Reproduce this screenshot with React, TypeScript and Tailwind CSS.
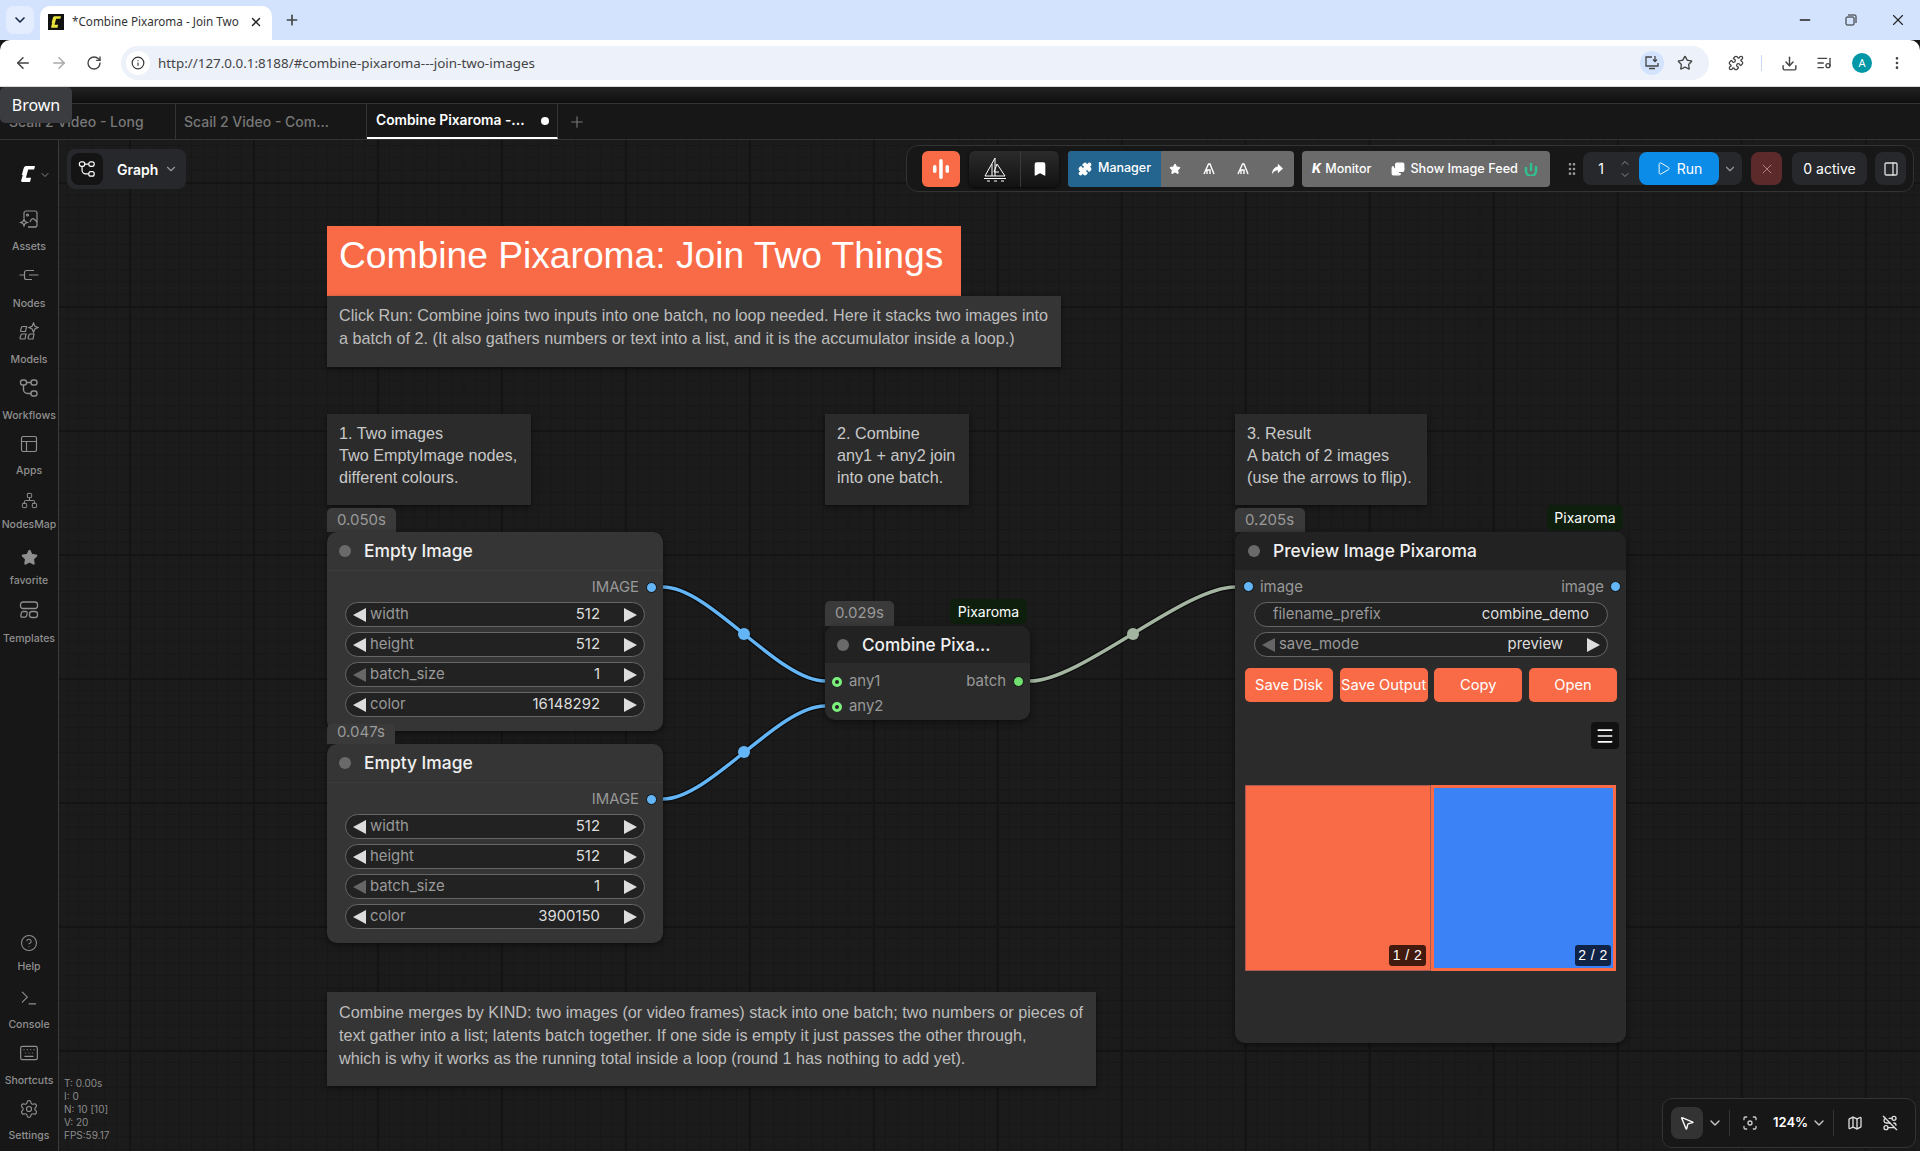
import type { ReactNode } from 'react';
import {
  ArrowLeft, ArrowRight, Bookmark, ChevronDown, ChevronUp, CircleHelp, Download, Focus, GripVertical,
  Images, Info, Keyboard, ListMusic, Map as MapIcon, Menu, Minus, MoreVertical, MousePointer2, Network,
  PanelRight, PanelsTopLeft, Play, Plus, Puzzle, RotateCw, RouteOff, Settings, Star, Terminal, X,
} from 'lucide-react';

const ICON = 'w-5 h-5 stroke-[1.4]';

function GraphIcon({ className = ICON }: { className?: string }) {
  return (
    <svg viewBox="0 0 20 20" fill="none" stroke="currentColor" strokeWidth="1.3" className={className}>
      <rect x="1.5" y="2" width="6" height="5" rx="2.2" />
      <rect x="12" y="2" width="6" height="5" rx="2.2" />
      <rect x="12" y="13" width="6" height="5" rx="2.2" />
      <path d="M7.5 4.5H12M4.5 7v4.5a4 4 0 0 0 4 4H12" />
    </svg>
  );
}

function AssetsIcon() {
  return (
    <svg viewBox="0 0 20 20" fill="none" stroke="currentColor" strokeWidth="1.2" className="w-5 h-5">
      <path d="M5 9V4a2 2 0 0 1 2-2h9a2 2 0 0 1 2 2v12a2 2 0 0 1-2 2H9" />
      <path d="M9 18h8M11 13c1-3 3-4 4-3l3 3" />
      <circle cx="8.5" cy="6" r="1" />
      <path d="M5 10l1 2.500 2.500 1-2.500 1L5 17l-1-2.500-2.500-1 2.500-1z" />
    </svg>
  );
}

function NodesIcon() {
  return (
    <svg viewBox="0 0 20 20" fill="none" stroke="currentColor" strokeWidth="1.2" className="w-5 h-5">
      <path d="M0.500 10H5M15 5.500H7.500a2 2 0 0 0-2 2v5a2 2 0 0 0 2 2H13M10 10h9.500" />
    </svg>
  );
}

function ModelsIcon() {
  return (
    <svg viewBox="0 0 20 20" fill="none" stroke="currentColor" strokeWidth="1.2" className="w-5 h-5">
      <path d="M3.500 4.500h4l-1 5h-4a1 1 0 0 1-1-1l1-3a1 1 0 0 1 1-1zM3 12h4l-1 5H2a1 1 0 0 1-1-1l1-3a1 1 0 0 1 1-1zM11 12h4l-1 5h-4a1 1 0 0 1-1-1l1-3a1 1 0 0 1 1-1z" />
      <path d="M14.500 1l1.400 3.200 3.200 1.400-3.200 1.400-1.400 3.200-1.400-3.200-3.200-1.400 3.200-1.400z" />
    </svg>
  );
}

function TemplatesIcon() {
  return (
    <svg viewBox="0 0 20 20" fill="none" stroke="currentColor" strokeWidth="1.3" className="w-5 h-5">
      <rect x="1.500" y="2" width="17" height="6.500" rx="2.500" />
      <path d="M3.500 11.500h3.500a1.200 1.200 0 0 1 1.200 1.400l-.6 3a1.600 1.600 0 0 1-1.600 1.300H3a1.200 1.200 0 0 1-1.200-1.400l.6-3a1.600 1.600 0 0 1 1.100-1.300z" />
      <rect x="10.500" y="11.500" width="8" height="6" rx="2.600" />
    </svg>
  );
}

function ComfyLogo({ className }: { className: string }) {
  return (
    <svg viewBox="0 0 14 16" className={className} fill="currentColor">
      <path d="M5 0h9l-.9 3.600H7.200L4.900 11.800h5.200L9 16H1.200C.4 16 0 15.400.2 14.600L1.800 9H.8L2.600 2.400C3 1 3.800 0 5 0z" />
    </svg>
  );
}

function Triangle({ dir, dim }: { dir: 'l' | 'r'; dim?: boolean }) {
  return (
    <svg viewBox="0 0 13 14" className={`w-[13px] h-[14px] shrink-0 ${dim ? 'text-[#666]' : 'text-[#ddd]'}`} fill="currentColor">
      <polygon points={dir === 'l' ? '13,0 13,14 0,7' : '0,0 0,14 13,7'} />
    </svg>
  );
}

function Mountain() {
  return (
    <svg viewBox="0 0 14 14" className="w-3.5 h-3.5" fill="none" stroke="white" strokeWidth="1.4">
      <path d="M2 12L6.500 2h1.500L12 12M5 12V8h3v4" />
    </svg>
  );
}

function Widget({ label, value, dimLeft }: { label: string; value: string; dimLeft?: boolean }) {
  return (
    <div className="h-[25px] rounded-full border border-[#666] bg-[#222] flex items-center px-[7px] text-[14.9px]">
      <Triangle dir="l" dim={dimLeft} />
      <span className="ml-[4px] text-[#999]">{label}</span>
      <span className="ml-auto mr-[24px] text-[#ddd]">{value}</span>
      <Triangle dir="r" />
    </div>
  );
}

function Dot({ kind }: { kind: 'blue' | 'ring' | 'green' }) {
  if (kind === 'ring') return <span className="block w-[10px] h-[10px] rounded-full border-[3px] border-[#7CF07C] bg-[#222]" />;
  if (kind === 'green') return <span className="block w-[11px] h-[11px] rounded-full bg-[#70E070] border border-[#111]" />;
  return <span className="block w-[11px] h-[11px] rounded-full bg-[#64B5F6] border border-[#111]" />;
}

function Badge({ className, children }: { className: string; children: ReactNode }) {
  return <div className={`absolute flex items-center pl-[10px] rounded-t-[5px] bg-[#3a3a3a] text-[#999] text-[15px] ${className}`}>{children}</div>;
}

function Tag({ className }: { className: string }) {
  return <div className={`absolute flex items-center justify-center rounded-[5px] bg-[#0E1F0E] text-white text-[14px] ${className}`}>Pixaroma</div>;
}

function EmptyImage({ className, color }: { className: string; color: string }) {
  return (
    <div className={`absolute w-[336px] h-[199px] rounded-[10px] bg-[#353535] shadow-[0_2px_6px_rgba(0,0,0,0.5)] ${className}`}>
      <div className="h-[39px] flex items-center pl-[12px] gap-[13px] border-b border-[#3c3c3c]">
        <span className="w-[12px] h-[12px] rounded-full bg-[#6a6a6a]" />
        <span className="text-[17.4px] font-medium text-[#f0f0f0]">Empty Image</span>
      </div>
      <div className="h-[31px] pt-[1px] flex items-center justify-end pr-[6px] gap-[7px] text-[14.9px] text-[#999]">
        IMAGE <Dot kind="blue" />
      </div>
      <div className="flex flex-col gap-[5px] px-[18px]">
        <Widget label="width" value="512" />
        <Widget label="height" value="512" />
        <Widget label="batch_size" value="1" dimLeft />
        <Widget label="color" value={color} />
      </div>
    </div>
  );
}

function OrangeButton({ children }: { children: ReactNode }) {
  return <div className="w-[88px] h-[34px] rounded-[5px] bg-[#F96B47] flex items-center justify-center text-white text-[14.7px] whitespace-nowrap">{children}</div>;
}

function SideItem({ label, h, pad = '', children }: { label: string; h: string; pad?: string; children: ReactNode }) {
  return (
    <div className={`flex flex-col items-center text-[#8f8f8f] ${h}`}>
      <div className={`flex-1 flex items-center justify-center ${pad}`}>{children}</div>
      <span className="h-[14px] leading-[14px] text-[10.5px] font-medium whitespace-nowrap">{label}</span>
    </div>
  );
}

function Sidebar() {
  return (
    <div className="w-[59px] shrink-0 h-full bg-[#171717] border-r border-[#3a3a3a] flex flex-col pb-[8px] z-10">
      <div className="h-[58px] flex items-start pt-[26px] pl-[21px] text-white gap-[4px]">
        <ComfyLogo className="w-[14px] h-[16px]" />
        <ChevronDown className="w-3 h-3 mt-[3px] text-[#888]" />
      </div>
      <SideItem label="Assets" h="h-[56px]"><AssetsIcon /></SideItem>
      <SideItem label="Nodes" h="h-[57px]" pad="pb-[2px]"><NodesIcon /></SideItem>
      <SideItem label="Models" h="h-[56px]"><ModelsIcon /></SideItem>
      <SideItem label="Workflows" h="h-[56px]"><GraphIcon /></SideItem>
      <SideItem label="Apps" h="h-[55px]"><PanelsTopLeft className={ICON} /></SideItem>
      <SideItem label="NodesMap" h="h-[54px]" pad="pt-[4px]"><Network className="w-[17px] h-[17px] stroke-[1.4]" /></SideItem>
      <SideItem label="favorite" h="h-[56px]" pad="pt-[8px]"><Star className="w-[17px] h-[17px] fill-current" /></SideItem>
      <SideItem label="Templates" h="h-[58px]"><TemplatesIcon /></SideItem>
      <div className="flex-1" />
      <SideItem label="Help" h="h-[56px]" pad="pt-[7px]"><CircleHelp className="w-[18px] h-[18px] stroke-[1.4]" /></SideItem>
      <SideItem label="Console" h="h-[58px]" pad="pt-[3px]"><Terminal className={ICON} /></SideItem>
      <SideItem label="Shortcuts" h="h-[56px]"><Keyboard className={ICON} /></SideItem>
      <SideItem label="Settings" h="h-[55px]"><Settings className={ICON} /></SideItem>
    </div>
  );
}

function Link({ d, mx, my, color }: { d: string; mx: number; my: number; color: string }) {
  return (
    <g fill="none">
      <path d={d} stroke="#000" strokeOpacity="0.6" strokeWidth="6" />
      <path d={d} stroke={color} strokeWidth="3.5" />
      <circle cx={mx} cy={my} r="6" fill={color} />
    </g>
  );
}

function TopBar() {
  return (
    <div className="absolute left-[906px] top-[5px] w-[1008px] h-[47px] rounded-[12px] border border-[#333] bg-[#171717] flex items-center pl-[15px] z-20">
      <div className="w-[38px] h-[36px] rounded-[6px] bg-[#F96B47] flex items-center justify-center">
        <svg viewBox="0 0 16 20" className="w-[16px] h-[20px]" fill="white">
          <rect x="0" y="6" width="3.500" height="8" rx="1.700" />
          <rect x="6.200" y="0" width="3.500" height="20" rx="1.700" />
          <rect x="12.500" y="6" width="3.500" height="8" rx="1.700" />
        </svg>
      </div>
      <div className="ml-[9px] w-[90px] h-[36px] rounded-[6px] bg-gradient-to-b from-[#2b2b2b] to-[#121212] flex shadow-[0_1px_3px_rgba(0,0,0,0.8)] text-white">
        <div className="w-[52px] flex items-center justify-center border-r border-[#3a3a3a]">
          <svg viewBox="0 0 26 26" className="w-[26px] h-[26px]" fill="none" stroke="white" strokeWidth="1">
            <path d="M13 2L3 20h20L15 8l-3 8h5M2 22.500h22M5 25h3M12 25h3M19 25h3M13 2v18M10 8v12" />
          </svg>
        </div>
        <div className="flex-1 flex items-center justify-center"><Bookmark className="w-4 h-4 fill-white" /></div>
      </div>
      <div className="ml-[9px] w-[226px] h-[36px] rounded-[4px] overflow-hidden flex bg-[#6b6b6b] text-white">
        <div className="w-[93px] bg-[#23658F] flex items-center pl-[10px] gap-[6px] text-[12.5px] font-medium">
          <Puzzle className="w-[14px] h-[14px] fill-white" /> Manager
        </div>
        <div className="flex-1 flex items-center justify-between pl-[8px] pr-[11px]">
          <Star className="w-3 h-3 fill-white" />
          <Mountain />
          <Mountain />
          <svg viewBox="0 0 14 14" className="w-3 h-3" fill="white"><path d="M8 1l6 5.500L8 12V8.500C5 8.500 3 10 1 13c.5-5 3-8.500 7-9z" /></svg>
        </div>
      </div>
      <div className="ml-[8px] w-[248px] h-[36px] rounded-[4px] bg-[#6b6b6b] flex items-center pl-[10px] pt-[1px] text-white text-[12.5px] font-medium">
        <span className="italic font-extrabold mr-[4px]">K</span>
        <span>Monitor</span>
        <Images className="w-[14px] h-[14px] ml-[20px] fill-white text-white" />
        <span className="ml-[5px] whitespace-nowrap text-[12.7px]">Show Image Feed</span>
        <svg viewBox="0 0 14 14" className="w-[14px] h-[14px] ml-[6px]" fill="none" stroke="#2FC28F" strokeWidth="2.400"><path d="M7 1v8M12 4v5a5 5 0 0 1-10 0V5" /></svg>
      </div>
      <GripVertical className="w-4 h-4 ml-[14px] text-[#999]" />
      <div className="ml-[3px] w-[159px] h-[33px] rounded-[8px] bg-[#26282b] flex items-center">
        <span className="w-[38px] text-right pr-[17px] text-white text-[14px]">1</span>
        <div className="flex flex-col text-[#888] -ml-[2px]">
          <ChevronUp className="w-3 h-3" />
          <ChevronDown className="w-3 h-3" />
        </div>
        <div className="ml-[8px] w-[80px] h-[33px] rounded-[8px] bg-[#0B8CE9] flex items-center justify-center gap-[6px] text-white text-[14px]">
          <Play className="w-[15px] h-[15px] stroke-[1.5]" /> Run
        </div>
        <ChevronDown className="w-3.5 h-3.5 ml-[4px] text-[#999]" />
      </div>
      <div className="ml-[9px] w-[31px] h-[33px] rounded-[8px] bg-[#5c2a2a] flex items-center justify-center text-[#b08080]"><X className="w-4 h-4 stroke-[1.5]" /></div>
      <div className="ml-[10px] w-[75px] h-[33px] rounded-[8px] bg-[#26282b] flex items-center justify-center text-white text-[14px] whitespace-nowrap">0 active</div>
      <div className="ml-[8px] w-[31px] h-[33px] rounded-[8px] bg-[#26282b] flex items-center justify-center text-[#ddd]"><PanelRight className="w-4 h-4" /></div>
    </div>
  );
}

function Canvas() {
  return (
    <div className="absolute inset-0 font-[Inter,sans-serif]">
      <svg className="absolute inset-0 w-full h-full" viewBox="0 0 1920 1011">
        <Link d="M663 447C710 447 778 541 825 541" mx={744} my={494} color="#64B5F6" />
        <Link d="M663 659C710 659 778 566 825 566" mx={744} my={612} color="#64B5F6" />
        <Link d="M1030 541C1081 541 1184 447 1235 447" mx={1133} my={494} color="#A3B5A0" />
      </svg>

      {/* Notes */}
      <div className="absolute left-[327px] top-[86px] w-[634px] h-[70px] bg-[#F96B47] text-white text-[37.2px] leading-[58px] pl-[12px] font-['Liberation_Sans',sans-serif] whitespace-nowrap">
        Combine Pixaroma: Join Two Things
      </div>
      <div className="absolute left-[327px] top-[156px] w-[734px] h-[71px] bg-[#353535] text-[#bdbdbd] text-[16.2px] leading-[23px] pt-[8px] pl-[12px] font-['Liberation_Sans',sans-serif] whitespace-nowrap shadow-[0_2px_5px_rgba(0,0,0,0.5)]">
        Click Run: Combine joins two inputs into one batch, no loop needed. Here it stacks two images into<br />
        a batch of 2. (It also gathers numbers or text into a list, and it is the accumulator inside a loop.)
      </div>
      <div className="absolute left-[327px] top-[274px] w-[204px] h-[91px] bg-[#2b2b2b] text-[#c8c8c8] text-[16.2px] leading-[22px] pt-[8px] pl-[12px] font-['Liberation_Sans',sans-serif] whitespace-nowrap shadow-[0_2px_5px_rgba(0,0,0,0.5)]">
        1. Two images<br />Two EmptyImage nodes,<br />different colours.
      </div>
      <div className="absolute left-[825px] top-[274px] w-[144px] h-[91px] bg-[#2b2b2b] text-[#c8c8c8] text-[16.2px] leading-[22px] pt-[8px] pl-[12px] font-['Liberation_Sans',sans-serif] whitespace-nowrap shadow-[0_2px_5px_rgba(0,0,0,0.5)]">
        2. Combine<br />any1 + any2 join<br />into one batch.
      </div>
      <div className="absolute left-[1235px] top-[274px] w-[192px] h-[91px] bg-[#2b2b2b] text-[#c8c8c8] text-[16.2px] leading-[22px] pt-[8px] pl-[12px] font-['Liberation_Sans',sans-serif] whitespace-nowrap shadow-[0_2px_5px_rgba(0,0,0,0.5)]">
        3. Result<br />A batch of 2 images<br />(use the arrows to flip).
      </div>
      <div className="absolute left-[327px] top-[852px] w-[769px] h-[94px] bg-[#353535] text-[#bdbdbd] text-[16.2px] leading-[23px] pt-[9px] pl-[12px] font-['Liberation_Sans',sans-serif] whitespace-nowrap shadow-[0_2px_5px_rgba(0,0,0,0.5)]">
        Combine merges by KIND: two images (or video frames) stack into one batch; two numbers or pieces of<br />
        text gather into a list; latents batch together. If one side is empty it just passes the other through,<br />
        which is why it works as the running total inside a loop (round 1 has nothing to add yet).
      </div>

      {/* Empty Image nodes */}
      <Badge className="left-[327px] top-[368px] w-[69px] h-[24px]">0.050s</Badge>
      <EmptyImage className="left-[327px] top-[392px]" color="16148292" />
      <EmptyImage className="left-[327px] top-[604px]" color="3900150" />
      <Badge className="left-[327px] top-[584px] w-[68px] h-[20px] pb-[4px]">0.047s</Badge>

      {/* Combine node */}
      <Badge className="left-[825px] top-[461px] w-[69px] h-[25px]">0.029s</Badge>
      <Tag className="left-[950px] top-[459px] w-[77px] h-[25px]" />
      <div className="absolute left-[825px] top-[486px] w-[205px] h-[94px] rounded-[10px] bg-[#2b2b2b] shadow-[0_2px_6px_rgba(0,0,0,0.5)]">
        <div className="h-[37px] rounded-t-[10px] bg-[#222] flex items-center pl-[12px] gap-[13px]">
          <span className="w-[12px] h-[12px] rounded-full bg-[#6a6a6a]" />
          <span className="text-[17.2px] font-medium text-[#f0f0f0] whitespace-nowrap">Combine Pixa...</span>
        </div>
        <div className="relative h-[57px] text-[14.9px] text-[#999] pl-[7px] pt-[6px]">
          <div className="h-[25px] flex items-center gap-[7px]"><Dot kind="ring" /> any1</div>
          <div className="h-[25px] flex items-center gap-[7px]"><Dot kind="ring" /> any2</div>
          <div className="absolute right-[6px] top-[6px] h-[25px] flex items-center gap-[7px]">batch <Dot kind="green" /></div>
        </div>
      </div>

      {/* Preview node */}
      <Badge className="left-[1235px] top-[368px] w-[70px] h-[24px]">0.205s</Badge>
      <Tag className="left-[1547px] top-[365px] w-[76px] h-[25px]" />
      <div className="absolute left-[1235px] top-[392px] w-[391px] h-[511px] rounded-[10px] bg-[#2b2b2b] shadow-[0_2px_6px_rgba(0,0,0,0.5)]">
        <div className="h-[38px] rounded-t-[10px] bg-[#222] flex items-center pl-[13px] gap-[13px]">
          <span className="w-[12px] h-[12px] rounded-full bg-[#6a6a6a]" />
          <span className="text-[17.4px] font-medium text-[#f0f0f0]">Preview Image Pixaroma</span>
        </div>
        <div className="h-[32px] pt-[2px] flex items-center justify-between pl-[8px] pr-[5px] text-[14.9px] text-[#999]">
          <span className="flex items-center gap-[6px]"><Dot kind="blue" /> image</span>
          <span className="flex items-center gap-[6px]">image <Dot kind="blue" /></span>
        </div>
        <div className="flex flex-col gap-[5px] pl-[19px] pr-[18px]">
          <div className="h-[25px] rounded-full border border-[#666] bg-[#222] flex items-center justify-between px-[18px] text-[14.9px]">
            <span className="text-[#999]">filename_prefix</span>
            <span className="text-[#ddd]">combine_demo</span>
          </div>
          <Widget label="save_mode" value="preview" dimLeft />
        </div>
        <div className="mt-[11px] flex justify-between pl-[10px] pr-[9px]">
          <OrangeButton>Save Disk</OrangeButton>
          <OrangeButton>Save Output</OrangeButton>
          <OrangeButton>Copy</OrangeButton>
          <OrangeButton>Open</OrangeButton>
        </div>
        <div className="mt-[20px] mr-[7px] ml-auto w-[28px] h-[27px] rounded-[4px] bg-[#111] flex items-center justify-center text-white">
          <Menu className="w-[20px] h-[20px]" />
        </div>
        <div className="mt-[36px] ml-[10px] w-[371px] h-[186px] flex">
          <div className="relative w-[186px] h-full bg-[#F96B47] border border-[#A85A50]">
            <span className="absolute right-[4px] bottom-[4px] w-[37px] h-[21px] rounded-[3px] bg-[#431A0E] text-white text-[14px] font-medium tracking-[0.5px] flex items-center justify-center font-['Liberation_Sans',sans-serif]">1 / 2</span>
          </div>
          <div className="relative flex-1 h-full bg-[#3B82F6] border-[3px] border-[#F96B47]">
            <span className="absolute right-[2px] bottom-[2px] w-[36px] h-[21px] rounded-[3px] bg-[#0F2347] text-white text-[14px] font-medium tracking-[0.5px] flex items-center justify-center font-['Liberation_Sans',sans-serif]">2 / 2</span>
          </div>
        </div>
      </div>

      <TopBar />

      {/* Graph button */}
      <div className="absolute left-[67px] top-[9px] w-[119px] h-[40px] rounded-[8px] bg-[#26282b] flex items-center pl-[4px] text-white z-20">
        <div className="w-[32px] h-[32px] rounded-[8px] bg-[#141414] flex items-center justify-center"><GraphIcon className="w-[18px] h-[18px]" /></div>
        <span className="ml-[14px] text-[14px] font-semibold">Graph</span>
        <ChevronDown className="w-3.5 h-3.5 ml-[6px] text-[#999]" />
      </div>

      {/* Stats */}
      <div className="absolute left-[64px] top-[937px] text-[10px] leading-[13px] text-[#8c8c8c] z-20">
        T: 0.00s<br />I: 0<br />N: 10 [10]<br />V: 20<br />FPS:59.17
      </div>

      {/* Zoom controls */}
      <div className="absolute left-[1662px] top-[958px] w-[254px] h-[50px] rounded-[10px] border border-[#333] bg-[#171717] flex items-center pl-[8px] text-white z-20">
        <div className="w-[32px] h-[32px] rounded-[8px] bg-[#333] flex items-center justify-center"><MousePointer2 className="w-4 h-4" /></div>
        <ChevronDown className="w-4 h-4 ml-[4px] text-[#ccc]" />
        <div className="ml-[6px] w-px h-[26px] bg-[#333]" />
        <Focus className="w-4 h-4 ml-[12px] text-[#ccc]" />
        <span className="ml-[15px] text-[13px] font-semibold">124%</span>
        <ChevronDown className="w-4 h-4 ml-[3px] text-[#ccc]" />
        <div className="ml-[6px] w-px h-[26px] bg-[#333]" />
        <MapIcon className="w-4 h-4 ml-[13px] text-[#ddd]" />
        <RouteOff className="w-4 h-4 ml-[19px] text-[#ddd]" />
      </div>
    </div>
  );
}

function Chrome() {
  return (
    <div className="font-['Noto_Sans',sans-serif] shrink-0">
      <div className="h-[40px] bg-[#D3E3FD] flex items-end relative">
        <div className="absolute left-[6px] top-[6px] w-[28px] h-[28px] rounded-[8px] bg-[#E4EDFD] flex items-center justify-center"><ChevronDown className="w-4 h-4 text-[#1b2a4a] stroke-[2.5]" /></div>
        <div className="ml-[40px] w-[232px] h-[34px] rounded-t-[10px] bg-white flex items-center pl-[8px] pb-[2px] text-[11.7px] text-[#333]">
          <div className="w-[16px] h-[16px] bg-[#111] flex items-center justify-center text-[#E8E23A]"><ComfyLogo className="w-[10px] h-[12px]" /></div>
          <span className="ml-[8px] w-[174px] whitespace-nowrap">*Combine Pixaroma - Join Two</span>
          <X className="w-[14px] h-[14px] ml-[3px] text-[#222] stroke-[2.5]" />
        </div>
        <Plus className="w-4 h-4 ml-[12px] mb-[12px] text-[#444] stroke-[2.5]" />
        <Minus className="absolute left-[1797px] top-[12px] w-4 h-4 text-[#222]" />
        <svg viewBox="0 0 12 12" fill="none" stroke="#222" className="absolute left-[1845px] top-[14px] w-3 h-3"><rect x="1" y="3" width="8" height="8" rx="1" /><path d="M3 1h7a1 1 0 0 1 1 1v7" /></svg>
        <X className="absolute left-[1889px] top-[11px] w-[18px] h-[18px] text-[#222] stroke-[1.5]" />
      </div>
      <div className="h-[46px] bg-white rounded-t-[10px] flex items-center text-[#444]">
        <ArrowLeft className="w-[18px] h-[18px] ml-[14px]" />
        <ArrowRight className="w-[18px] h-[18px] ml-[18px] text-[#aaa]" />
        <RotateCw className="w-4 h-4 ml-[18px]" />
        <div className="ml-[19px] w-[1588px] h-[34px] rounded-full bg-[#ECF1FA] flex items-center pl-[5px]">
          <div className="w-[24px] h-[24px] rounded-full bg-white flex items-center justify-center"><Info className="w-[14px] h-[14px] text-[#333]" /></div>
          <span className="ml-[8px] text-[13.4px] text-[#444]">http://127.0.0.1:8188/#combine-pixaroma---join-two-images</span>
          <div className="ml-auto w-[24px] h-[24px] rounded-full bg-[#D3E3FD] flex items-center justify-center">
            <svg viewBox="0 0 16 16" fill="none" stroke="#444" strokeWidth="1.300" className="w-4 h-4"><path d="M8 2H2v9h12V8M5 13.500h6M11 1v5M9 4.500l2 2 2-2" /></svg>
          </div>
          <Star className="w-4 h-4 ml-[13px] mr-[16px] text-[#444]" />
        </div>
        <Puzzle className="w-4 h-4 ml-[19px]" />
        <div className="w-px h-[16px] bg-[#C8DAF8] ml-[17px]" />
        <Download className="w-[17px] h-[17px] ml-[19px]" />
        <ListMusic className="w-4 h-4 ml-[18px]" />
        <div className="ml-[20px] w-[20px] h-[20px] rounded-full bg-[#0097A7] text-white text-[11px] flex items-center justify-center">A</div>
        <MoreVertical className="w-4 h-4 ml-[17px]" />
      </div>
      <div className="h-px bg-[#d8d8d8]" />
    </div>
  );
}

export default function App() {
  return (
    <div className="relative w-[1920px] h-screen overflow-hidden flex flex-col bg-[#171717] font-[Inter,sans-serif]">
      <Chrome />
      <div className="h-[16px] shrink-0 bg-gradient-to-b from-[#222] to-[#0f0f0f]" />
      <div className="h-[37px] shrink-0 bg-[#171717] border-y border-[#333] flex text-[14px] text-[#777]">
        <div className="w-[176px] border-r border-[#333] pl-[9px] flex items-center font-medium whitespace-nowrap">Scail 2 Video - Long</div>
        <div className="w-[191px] border-r border-[#333] pl-[8px] flex items-center font-medium whitespace-nowrap">Scail 2 Video - Com...</div>
        <div className="w-[191px] border-r border-b-2 border-b-white border-r-[#333] pl-[9px] flex items-center text-white font-semibold whitespace-nowrap">
          <span className="text-[13.8px]">Combine Pixaroma -...</span>
          <span className="ml-[16px] w-[8px] h-[8px] rounded-full bg-white" />
        </div>
        <Plus className="w-[18px] h-[18px] ml-[10px] self-center text-[#777] stroke-[1.5]" />
      </div>
      <div className="relative flex-1 flex min-h-0">
        <Sidebar />
        <div className="flex-1 bg-[#1b1b1b] bg-[linear-gradient(to_right,#141414_2px,transparent_2px),linear-gradient(to_bottom,#141414_2px,transparent_2px),linear-gradient(to_right,#171717_1px,transparent_1px),linear-gradient(to_bottom,#171717_1px,transparent_1px)] bg-[size:124px_124px,124px_124px,12.4px_12.4px,12.4px_12.4px] bg-[position:70px_42px,70px_42px,8px_5px,8px_5px]" />
        <Canvas />
      </div>
      <div className="absolute left-0 top-[87px] w-[72px] h-[36px] rounded-[5px] bg-[#3B3C40] text-white text-[16px] flex items-center justify-center z-30 font-['Noto_Sans',sans-serif]">Brown</div>
    </div>
  );
}
